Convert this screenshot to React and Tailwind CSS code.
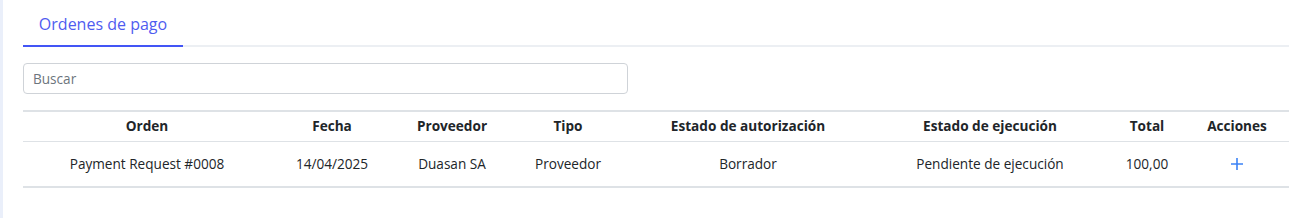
const columns = [
  { key: 'orden', label: 'Orden', width: 'w-[248px]' },
  { key: 'fecha', label: 'Fecha', width: 'w-[122px]' },
  { key: 'proveedor', label: 'Proveedor', width: 'w-[118px]' },
  { key: 'tipo', label: 'Tipo', width: 'w-[114px]' },
  { key: 'autorizacion', label: 'Estado de autorización', width: 'w-[246px]' },
  { key: 'ejecucion', label: 'Estado de ejecución', width: 'w-[238px]' },
  { key: 'total', label: 'Total', width: 'w-[76px]' },
  { key: 'acciones', label: 'Acciones', width: 'w-[104px]' },
];

const rows = [
  {
    orden: 'Payment Request #0008',
    fecha: '14/04/2025',
    proveedor: 'Duasan SA',
    tipo: 'Proveedor',
    autorizacion: 'Borrador',
    ejecucion: 'Pendiente de ejecución',
    total: '100,00',
  },
];

function PlusIcon() {
  return (
    <svg width="14" height="14" viewBox="0 0 14 14" className="text-[#3b82f6]">
      <path d="M7 1v12M1 7h12" stroke="currentColor" strokeWidth="1.6" fill="none" />
    </svg>
  );
}

export default function App() {
  return (
    <div className="flex min-h-[218px] bg-white font-['Open_Sans',sans-serif] text-[#212529]">
      <div className="w-[3px] shrink-0 bg-[#eaeffa]" />
      <div className="ml-[20px] flex w-[1266px] flex-col pt-[11px]">
        {/* Tabs */}
        <div className="flex border-b-2 border-[#eceff3]">
          <button className="-mb-[2px] w-[160px] border-b-2 border-[#4355f5] pb-[8px] text-center text-[16px] leading-[26px] text-[#4f5cf0]">
            Ordenes de pago
          </button>
        </div>

        <input
          type="text"
          placeholder="Buscar"
          className="mt-[16px] h-[31px] w-[605px] rounded-[4px] border border-[#cfd3d8] px-[9px] text-[13.6px] text-[#212529] placeholder:text-[#6c757d] outline-none"
        />

        <table className="mt-[16px] w-[1266px] table-fixed border-collapse text-[13.6px]">
          <thead>
            <tr className="border-t-2 border-b border-[#dee2e6]">
              {columns.map((c) => (
                <th key={c.key} className={`${c.width} h-[30px] py-0 text-center font-bold leading-[20px]`}>
                  {c.label}
                </th>
              ))}
            </tr>
          </thead>
          <tbody>
            {rows.map((r) => (
              <tr key={r.orden} className="border-b-2 border-[#dee2e6]">
                {columns.map((c) => (
                  <td key={c.key} className="h-[46px] text-center leading-[20px]">
                    {c.key === 'acciones' ? (
                      <button className="inline-flex items-center justify-center pt-[5px]">
                        <PlusIcon />
                      </button>
                    ) : (
                      r[c.key]
                    )}
                  </td>
                ))}
              </tr>
            ))}
          </tbody>
        </table>
      </div>
    </div>
  );
}
